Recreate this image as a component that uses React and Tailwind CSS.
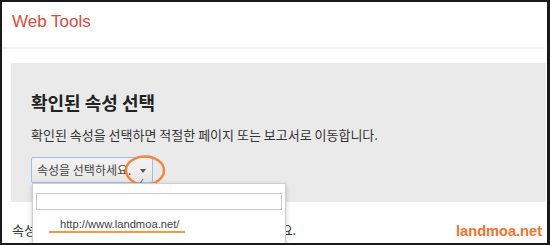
import React from "react";

const ko = "font-['Noto_Sans_CJK_KR','Noto_Sans',sans-serif]";
const en = "font-['Liberation_Sans',Arial,sans-serif]";

const Annotations = () => (
  <svg
    className="absolute inset-0 pointer-events-none"
    width="545"
    height="241"
    viewBox="2 2 545 241"
  >
    {/* orange circle around the select arrow */}
    <ellipse cx="145" cy="170.5" rx="19" ry="14" fill="none" stroke="#f0883e" strokeWidth="2.5" />
    {/* blue pointer arrow */}
    <line x1="143" y1="179" x2="123.5" y2="209" stroke="#3b8fe8" strokeWidth="1.3" />
    <polygon points="120.5,213 127.7,208.2 121.9,204.4" fill="#3b8fe8" />
  </svg>
);

const SelectBox = () => (
  <div className="relative mt-[14px] w-[122px]">
    <button className="flex h-[26px] w-[122px] items-center justify-between rounded-[2px] border border-[#9fbfe8] bg-linear-to-b from-[#f4f4f4] to-[#e7e7e7] pl-[5px] pr-[6px]">
      <span className={`${ko} text-[12px] leading-[16px] text-[#444]`}>속성을 선택하세요.</span>
      <span className="mt-[1px] h-0 w-0 border-x-[3px] border-t-[4px] border-x-transparent border-t-[#555]" />
    </button>

    {/* open dropdown */}
    <div className="absolute left-[1px] top-[26px] z-10 h-[80px] w-[254px] border border-[#cfcfcf] bg-white px-[3px] pt-[9px] shadow-[0_2px_5px_rgba(0,0,0,0.2)]">
      <div className="h-[17px] w-full border border-[#c8c8c8] bg-white" />
      <div className={`${en} mt-[6px] pl-[24px] text-[11.2px] leading-[16px] text-[#444]`}>
        http://www.landmoa.net/
      </div>
      <div className="absolute left-[16px] top-[47px] h-[2px] w-[136px] bg-[#f39a3a]" />
    </div>
  </div>
);

export default function App() {
  return (
    <div className="relative h-[245px] w-[550px] overflow-hidden border-y-2 border-l-2 border-r-[3px] border-[#1a1a1a] bg-white">
      {/* header */}
      <div className="h-[45px] pl-[10px] pt-[7px]">
        <span className={`${en} text-[17px] leading-[20px] text-[#dd4b39]`}>Web Tools</span>
      </div>
      <div className="mr-[2px] h-[2px] bg-[#f1f1f1]" />

      {/* gray panel */}
      <div className="ml-[9px] mr-[1px] mt-[14px] h-[139px] bg-[#eaeaea] pl-[20px] pt-[27px]">
        <h2 className={`${ko} text-[18px] font-bold leading-[24px] text-[#222]`}>확인된 속성 선택</h2>
        <p className={`${ko} mt-[13px] text-[13px] leading-[16px] text-[#333]`}>
          확인된 속성을 선택하면 적절한 페이지 또는 보고서로 이동합니다.
        </p>
        <SelectBox />
      </div>

      {/* bottom row */}
      <div className="mt-[18px] flex items-center justify-between pl-[10px] pr-[5px]">
        <p className={`${ko} text-[13px] leading-[16px] text-[#333]`}>
          속성이 목록에 없으면 새 속성을 추가하고 확인하세요.
        </p>
        <span className={`${en} mt-[3px] text-[14.6px] font-bold leading-[16px] text-[#f4722b]`}>landmoa.net</span>
      </div>

      <Annotations />
    </div>
  );
}
